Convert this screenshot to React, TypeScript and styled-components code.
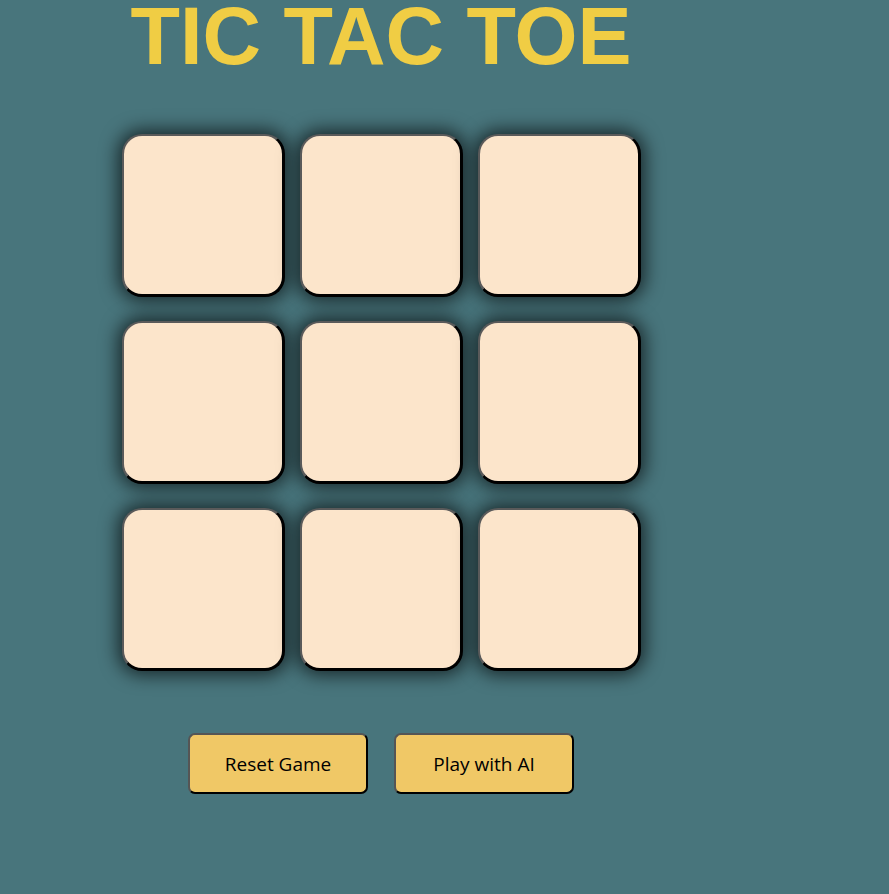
import styled, { createGlobalStyle } from 'styled-components';

const GlobalStyle = createGlobalStyle`
     html, body {
          margin: 0;
          padding: 0;
          background-color: #48757c;
          min-height: 100%;
     }
`;

export default function App() {
     const cells = Array.from({ length: 9 }, (_, i) => i);

     return (
          <>
               <GlobalStyle />
               <Page>
                    <Title>TIC TAC TOE</Title>
                    <Board>
                         {cells.map((i) => (
                              <Cell key={i} />
                         ))}
                    </Board>
                    <Controls>
                         <ActionButton>Reset Game</ActionButton>
                         <ActionButton>Play with AI</ActionButton>
                    </Controls>
               </Page>
          </>
     );
}

const Page = styled.div`
     width: 762px;
     min-height: 894px;
     display: flex;
     flex-direction: column;
     align-items: center;
`;

const Title = styled.h1`
     margin: 0;
     font-family: "Liberation Sans", Arial, sans-serif;
     font-weight: 700;
     font-size: 81px;
     line-height: 72px;
     color: #f0cd44;
`;

const Board = styled.div`
     margin-top: 62px;
     display: grid;
     grid-template-columns: repeat(3, 163px);
     column-gap: 15px;
     row-gap: 24px;
`;

const Cell = styled.button`
     box-sizing: border-box;
     width: 163px;
     height: 163px;
     background-color: #fce5cb;
     border-style: solid;
     border-width: 2px 3px 3px 2px;
     border-color: #5a5a5a #000 #000 #5a5a5a;
     border-radius: 20px;
     box-shadow: 0 0 18px 4px rgba(0, 0, 0, 0.65);
     cursor: pointer;
`;

const Controls = styled.div`
     margin-top: 62px;
     display: flex;
     gap: 26px;
`;

const ActionButton = styled.button`
     box-sizing: border-box;
     width: 180px;
     height: 61px;
     background-color: #f0c866;
     border-style: solid;
     border-width: 2px;
     border-color: #555 #000 #000 #555;
     border-radius: 7px;
     font-family: "Trebuchet MS", "Open Sans", sans-serif;
     font-size: 19px;
     color: #000;
     cursor: pointer;
`;
